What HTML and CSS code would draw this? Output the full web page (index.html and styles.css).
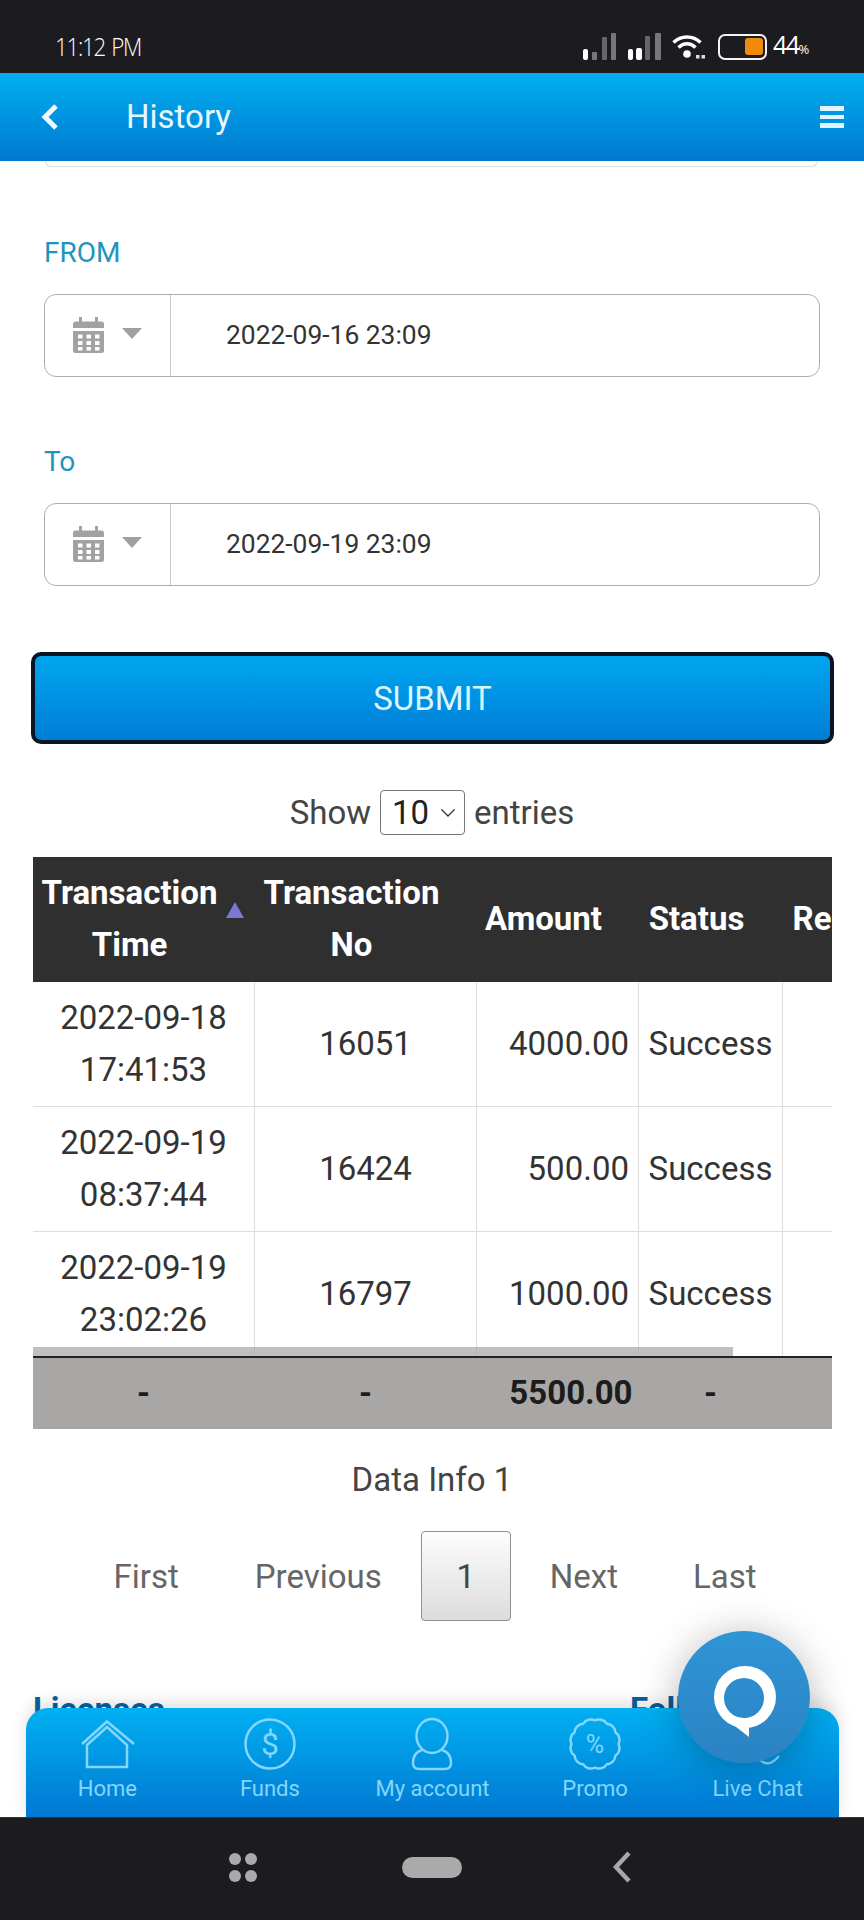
FILE: index.html
```html
<!DOCTYPE html>
<html lang="en">
<head>
<meta charset="utf-8">
<title>History</title>
<link rel="stylesheet" href="styles.css">
</head>
<body>
<div class="phone">
  <div class="statusbar">
    <span class="clock">11:12 PM</span>
    <div class="status-icons">
      <svg class="sig" width="34" height="27" viewBox="0 0 34 27"><rect x="0" y="16" width="5" height="11" rx="2" fill="#fff"/><rect x="9" y="19" width="5" height="8" rx="1" fill="#777"/><rect x="19" y="4" width="5" height="23" rx="1" fill="#666"/><rect x="28" y="0" width="5" height="27" rx="1" fill="#777"/></svg>
      <svg class="sig" width="33" height="27" viewBox="0 0 33 27"><rect x="0" y="16" width="5" height="11" rx="2" fill="#fff"/><rect x="8" y="15" width="6" height="12" rx="2" fill="#fff"/><rect x="17" y="3" width="5" height="24" rx="1" fill="#666"/><rect x="27" y="0" width="6" height="27" rx="1" fill="#777"/></svg>
      <svg class="wifi" width="34" height="25" viewBox="0 0 34 25"><path d="M1.500 8.500C9 1 21 1 28.500 8.500M6.500 13.500C11.500 8.500 18.500 8.500 23.500 13.500" fill="none" stroke="#fff" stroke-width="3.500"/><circle cx="15" cy="20" r="3.800" fill="#fff"/><rect x="24" y="21" width="3.500" height="3.500" fill="#ddd"/><rect x="29.500" y="21" width="3.500" height="3.500" fill="#ddd"/></svg>
      <span class="battery"><span class="battery-fill"></span></span>
      <span class="pct">44<small>%</small></span>
    </div>
  </div>

  <header class="appbar">
    <svg class="back" width="20" height="28" viewBox="0 0 20 28"><path d="M16 3 5 14l11 11" fill="none" stroke="#eefaff" stroke-width="5"/></svg>
    <h1 class="title">History</h1>
    <div class="burger"><i></i><i></i><i></i></div>
  </header>

  <main class="content">
    <div class="cut-field"></div>

    <label class="field-label">FROM</label>
    <div class="date-input">
      <div class="date-addon">
        <svg width="31" height="36" viewBox="0 0 31 36"><use href="#cal"/></svg>
        <span class="caret"></span>
      </div>
      <div class="date-value">2022-09-16 23:09</div>
    </div>

    <label class="field-label to">To</label>
    <div class="date-input">
      <div class="date-addon">
        <svg width="31" height="36" viewBox="0 0 31 36"><use href="#cal"/></svg>
        <span class="caret"></span>
      </div>
      <div class="date-value">2022-09-19 23:09</div>
    </div>

    <button class="submit" type="button">SUBMIT</button>

    <div class="length">
      <span>Show</span>
      <span class="select">10<svg width="16" height="10" viewBox="0 0 16 10"><path d="M1.500 1.500 8 8l6.500-6.500" fill="none" stroke="#333" stroke-width="1.300"/></svg></span>
      <span>entries</span>
    </div>

    <div class="table-wrap">
      <table class="data">
        <colgroup><col class="c1"><col class="c2"><col class="c3"><col class="c4"><col class="c5"></colgroup>
        <thead>
          <tr>
            <th class="sorted">Transaction Time</th>
            <th>Transaction No</th>
            <th>Amount</th>
            <th>Status</th>
            <th class="remark">Remark</th>
          </tr>
        </thead>
        <tbody>
          <tr><td>2022-09-18<br>17:41:53</td><td>16051</td><td class="num">4000.00</td><td>Success</td><td></td></tr>
          <tr><td>2022-09-19<br>08:37:44</td><td>16424</td><td class="num">500.00</td><td>Success</td><td></td></tr>
          <tr><td>2022-09-19<br>23:02:26</td><td>16797</td><td class="num">1000.00</td><td>Success</td><td></td></tr>
        </tbody>
        <tfoot>
          <tr><td>-</td><td>-</td><td class="num">5500.00</td><td>-</td><td></td></tr>
        </tfoot>
      </table>
      <div class="scrollthumb"></div>
    </div>

    <div class="info">Data Info 1</div>

    <nav class="pager">
      <a>First</a><a>Previous</a><a class="current">1</a><a>Next</a><a class="last">Last</a>
    </nav>

    <div class="site-footer">
      <h2>Licenses</h2>
      <h2>Follow</h2>
    </div>

    <nav class="tabbar">
      <a class="tab">
        <svg width="56" height="56" viewBox="0 0 56 56"><path d="M3 27 28 4.500 55 27M8 28 28 10 48 28V50H8Z" fill="none" stroke="#84d6fa" stroke-width="2.500"/></svg>
        <span>Home</span>
      </a>
      <a class="tab">
        <svg width="56" height="56" viewBox="0 0 56 56"><circle cx="28" cy="27" r="24.500" fill="none" stroke="#84d6fa" stroke-width="2.500"/><text x="28" y="38" text-anchor="middle" class="glyph-dollar">$</text></svg>
        <span>Funds</span>
      </a>
      <a class="tab">
        <svg width="56" height="56" viewBox="0 0 56 56"><ellipse cx="28" cy="19" rx="15.500" ry="17" fill="none" stroke="#84d6fa" stroke-width="2.500"/><path d="M18 33C11 35 9 41 9 46 9 50 11 52 15 52H41C45 52 47 50 47 46 47 41 45 35 38 33" fill="none" stroke="#84d6fa" stroke-width="2.500"/></svg>
        <span>My account</span>
      </a>
      <a class="tab">
        <svg width="56" height="56" viewBox="0 0 56 56"><path d="M51.500 27A9 9 0 0 1 48.350 38.750 9 9 0 0 1 39.750 47.350 9 9 0 0 1 28 50.500 9 9 0 0 1 16.250 47.350 9 9 0 0 1 7.650 38.750 9 9 0 0 1 4.500 27 9 9 0 0 1 7.650 15.250 9 9 0 0 1 16.250 6.650 9 9 0 0 1 28 3.500 9 9 0 0 1 39.750 6.650 9 9 0 0 1 48.350 15.250 9 9 0 0 1 51.500 27Z" fill="none" stroke="#84d6fa" stroke-width="2.500" stroke-linejoin="round"/><text x="28" y="36" text-anchor="middle" class="glyph-pct">%</text></svg>
        <span>Promo</span>
      </a>
      <a class="tab">
        <svg width="56" height="56" viewBox="0 0 56 56"><path d="M29 42Q38 52 49 39" fill="none" stroke="#84d6fa" stroke-width="2.500"/></svg>
        <span>Live Chat</span>
      </a>
    </nav>

    <div class="chat-fab">
      <svg width="132" height="132" viewBox="0 0 132 132"><path fill-rule="evenodd" fill="#fff" d="M67 35A31 31 0 1 1 67 97 31 31 0 1 1 67 35ZM66 47A20 20 0 1 0 66 87 20 20 0 1 0 66 47Z"/><path fill="#fff" d="M44 85 71 106V91L66 87Z"/></svg>
    </div>
  </main>

  <div class="sysnav">
    <div class="dots"><i></i><i></i><i></i><i></i></div>
    <span class="home-pill"></span>
    <svg width="20" height="32" viewBox="0 0 20 32"><path d="M17 2 4 16l13 14" fill="none" stroke="#a8a8a8" stroke-width="4.500"/></svg>
  </div>
</div>

<svg class="defs" width="0" height="0">
  <defs>
    <g id="cal" fill="#a2a2a2">
      <rect x="6" y="0" width="3" height="6"/>
      <rect x="22" y="0" width="3" height="6"/>
      <path d="M0 11V7Q0 4.500 2.500 4.500H28.500Q31 4.500 31 7V11Z"/>
      <path fill-rule="evenodd" d="M0 14H31V33.500Q31 36 28.500 36H2.500Q0 36 0 33.500ZM5 17.500V21.500H9.500V17.500ZM13.500 17.500V21.500H18V17.500ZM22 17.500V21.500H26.500V17.500ZM5 24V28H9.500V24ZM13.500 24V28H18V24ZM22 24V28H26.500V24ZM5 30V33.500H9.500V30ZM13.500 30V33.500H18V30ZM22 30V33.500H26.500V30Z"/>
    </g>
  </defs>
</svg>
</body>
</html>
```

FILE: styles.css
```css
* { box-sizing: border-box; }
html, body { margin: 0; padding: 0; background: #fff; }
body { font-family: Roboto, "Liberation Sans", sans-serif; color: #333; }
.defs { position: absolute; }

.phone { width: 864px; height: 1920px; display: flex; flex-direction: column; overflow: hidden; }

/* status bar */
.statusbar { height: 73px; flex: none; background: #1c1c20; display: flex; align-items: center; justify-content: space-between; padding: 20px 55px 0 55px; color: #fff; }
.clock { font-family: "Open Sans", sans-serif; font-weight: 300; font-size: 26px; line-height: 27px; letter-spacing: -1.5px; word-spacing: 2px; transform: scaleX(.86); transform-origin: left center; }
.status-icons { display: flex; align-items: center; }
.status-icons svg { display: block; }
.sig + .sig { margin-left: 11px; }
.wifi { margin-left: 11px; }
.battery { width: 49px; height: 26px; margin-left: 12px; border: 2.5px solid #f4f4f4; border-radius: 7px; display: flex; justify-content: flex-end; align-items: center; padding-right: 2px; }
.battery-fill { width: 18px; height: 17px; background: #f08a0c; border-radius: 3px; }
.pct { margin-left: 6px; width: 36px; font-family: "Open Sans", sans-serif; font-weight: 400; font-size: 25px; line-height: 27px; letter-spacing: -1.5px; color: #fff; }
.pct small { font-size: 13px; letter-spacing: 0; }

/* app bar */
.appbar { height: 88px; flex: none; display: flex; align-items: center; padding: 0 20px 0 40px; background: linear-gradient(180deg, #00aff0 0%, #0079d0 100%); color: #e6f8ff; }
.back { display: block; }
.title { margin: 0 0 0 66px; font-size: 33px; font-weight: 400; line-height: 40px; }
.burger { margin-left: auto; width: 24px; display: flex; flex-direction: column; gap: 4px; }
.burger i { display: block; height: 4.5px; background: #dff6ff; }

/* scrollable content */
.content { flex: 1; position: relative; overflow: hidden; background: #fff; }
.cut-field { height: 6px; margin: 0 46px 0 45px; border: 1px solid #e2dcd4; border-top: 0; border-radius: 0 0 8px 8px; }
.field-label { display: block; margin: 70px 44px 25px; font-size: 28px; line-height: 32px; font-weight: 400; color: #1e95bd; }
.field-label.to { margin-top: 69px; }

.date-input { height: 83px; margin: 0 44px; display: flex; border: 1.5px solid #aeaeae; border-radius: 12px; }
.date-addon { width: 126px; flex: none; display: flex; align-items: center; padding-left: 28px; border-right: 1.5px solid #c8c8c8; }
.date-addon svg { display: block; margin-top: -2px; }
.caret { margin: -5px 0 0 18px; width: 0; height: 0; border-left: 10.5px solid transparent; border-right: 10.5px solid transparent; border-top: 11px solid #a0a0a0; }
.date-value { padding-left: 55px; font-size: 26.4px; line-height: 80px; color: #333; font-weight: 400; }

.submit { display: block; width: 803px; height: 92px; margin: 66px 0 0 31px; border: 4px solid #0a1422; border-radius: 10px; background: linear-gradient(180deg, #00a6ef 0%, #007ed6 100%); color: #d9f6ff; font: 400 33px Roboto, sans-serif; padding: 0; }

.length { margin-top: 46px; display: flex; justify-content: center; align-items: center; gap: 9px; height: 45px; font-size: 33px; color: #444; }
.select { width: 85px; height: 45px; border: 1px solid #777; border-radius: 4px; display: flex; align-items: center; justify-content: space-between; padding: 0 8px 0 11px; color: #222; }
.select svg { display: block; }

/* table */
.table-wrap { position: relative; width: 799px; margin: 22px 0 0 33px; overflow: hidden; }
.data { width: 970px; margin-left: -1px; table-layout: fixed; border-collapse: collapse; font-size: 33px; line-height: 52px; }
.c1 { width: 222px; } .c2 { width: 222px; } .c3 { width: 162px; } .c4 { width: 144px; } .c5 { width: 220px; }
.data th { background: #2f2f2f; color: #fff; font-weight: 700; padding: 10px 36px 11px 8px; text-align: center; position: relative; }
.data th.remark { text-align: left; padding-left: 10px; }
.data th.sorted::after { content: ""; position: absolute; right: 11px; top: 45px; border-left: 9px solid transparent; border-right: 9px solid transparent; border-bottom: 16px solid #7a78d2; }
.data tbody td { padding: 10px 8px; text-align: center; border: 1px solid #ddd; border-top: 0; color: #333; }
.data td.num { text-align: right; padding-right: 9px; }
.data tfoot td { background: #a9a6a6; color: #1c1c1c; font-weight: 700; text-align: center; padding: 9px 8px 10px; border-top: 2px solid #222; }
.data tfoot td.num { padding-right: 6px; }
.scrollthumb { position: absolute; left: 0; bottom: 73px; width: 700px; height: 9px; background: rgba(170,170,170,.75); }

.info { margin-top: 33px; text-align: center; font-size: 33px; line-height: 36px; color: #444; }

.pager { margin-top: 33px; display: flex; justify-content: center; align-items: center; font-size: 33px; color: #666; padding-left: 6px; }
.pager a { padding: 0 38px; }
.pager a.current { width: 90px; height: 90px; margin: 0 1px; padding: 0; border: 1px solid #8f8f8f; border-radius: 4px; display: flex; align-items: center; justify-content: center; color: #444; background: linear-gradient(180deg, #fdfdfd 0%, #dcdcdc 100%); }
.pager a.last { margin-left: -1px; }

.site-footer { margin: 69px 0 0 33px; display: grid; grid-template-columns: 597px 1fr; }
.site-footer h2 { margin: 0; font-size: 33px; line-height: 40px; font-weight: 700; color: #0b5fa0; }

/* fixed bottom tabs */
.tabbar { position: absolute; left: 26px; bottom: 0; width: 813px; height: 109px; display: grid; grid-template-columns: repeat(5, 1fr); border-radius: 22px 22px 0 0; background: linear-gradient(180deg, #00b0f2 0%, #0078d2 100%); box-shadow: 0 -6px 16px rgba(0,0,0,.12); }
.tab { display: flex; flex-direction: column; align-items: center; color: #84d6fa; font-size: 22px; line-height: 30px; padding-top: 9px; }
.tab svg { display: block; height: 56px; margin-bottom: 1px; }
.glyph-dollar { font: 400 32px Roboto, sans-serif; fill: #84d6fa; }
.glyph-pct { font: 400 25px Roboto, sans-serif; fill: #84d6fa; }

.chat-fab { position: absolute; left: 678px; top: 1470px; width: 132px; height: 132px; border-radius: 50%; background: linear-gradient(180deg, #2f95d5 0%, #2a82c3 100%); box-shadow: 0 4px 40px rgba(0,0,0,.28); }
.chat-fab svg { display: block; }

/* system nav */
.sysnav { height: 103px; flex: none; background: #1c1c20; border-top: 1px solid #33363c; display: flex; align-items: center; padding: 0 0 4px 229px; }
.dots { width: 28px; display: grid; grid-template-columns: 12px 12px; gap: 5px 4px; }
.dots i { width: 12px; height: 12px; border-radius: 50%; background: #aaa; }
.home-pill { width: 60px; height: 21px; margin-left: 145px; border-radius: 11px; background: #aaa; }
.sysnav svg { display: block; margin-left: 150px; }
```
